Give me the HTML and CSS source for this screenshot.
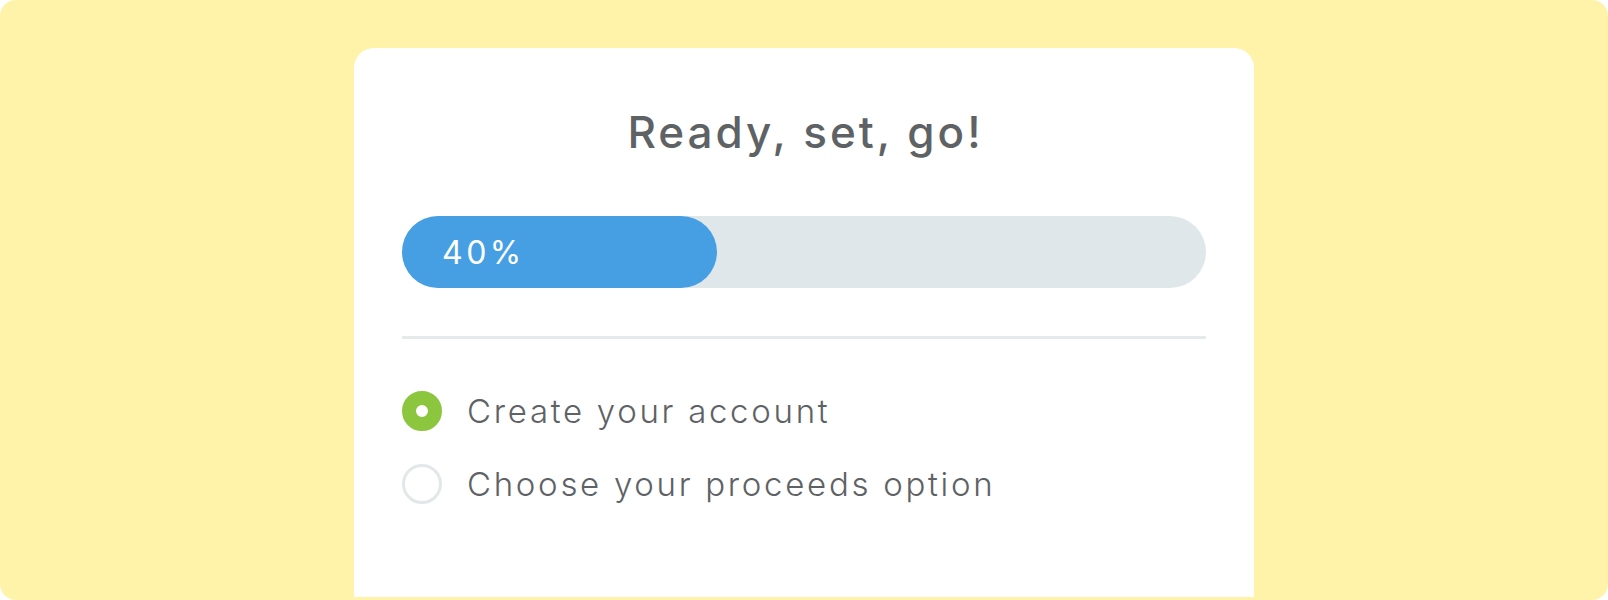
FILE: index.html
```html
<!DOCTYPE html>
<html>
<head>
<meta charset="utf-8">
<link rel="stylesheet" href="styles.css">
</head>
<body>
<div class="frame">
  <div class="card">
    <h1 class="title">Ready, set, go!</h1>
    <div class="progress">
      <div class="progress-fill" style="width: 39.2%"><span class="progress-label">40%</span></div>
    </div>
    <div class="divider"></div>
    <ul class="steps">
      <li class="step step-done"><span class="dot"></span><span class="step-text">Create your account</span></li>
      <li class="step"><span class="dot"></span><span class="step-text">Choose your proceeds option</span></li>
    </ul>
  </div>
</div>
</body>
</html>
```
FILE: styles.css
```css
html, body {
  margin: 0;
  padding: 0;
  background: #ffffff;
}
body {
  font-family: "Inter", "Lato", sans-serif;
}
.frame {
  width: 1608px;
  height: 600px;
  background: #fef3a9;
  border-radius: 16px;
  overflow: hidden;
  box-sizing: border-box;
  padding-top: 48px;
}
.card {
  width: 900px;
  height: 549px;
  margin: 0 auto;
  background: #ffffff;
  border-radius: 20px 20px 0 0;
  box-sizing: border-box;
  padding: 56px 48px 0;
}
.title {
  margin: 0;
  text-align: center;
  font-size: 44px;
  line-height: 56px;
  font-weight: 500;
  letter-spacing: 3px;
  text-indent: 3px;
  color: #5e6265;
}
.progress {
  margin-top: 56px;
  height: 72px;
  border-radius: 36px;
  background: #dfe7eb;
  display: flex;
}
.progress-fill {
  height: 72px;
  border-radius: 36px;
  background: #479fe3;
  display: flex;
  align-items: center;
  padding-left: 40px;
  box-sizing: border-box;
}
.progress-label {
  color: #ffffff;
  font-size: 32px;
  font-weight: 400;
  letter-spacing: 3.5px;
}
.divider {
  margin-top: 48px;
  height: 3px;
  background: #e4e9ea;
}
.steps {
  list-style: none;
  margin: 52px 0 0;
  padding: 0;
  display: flex;
  flex-direction: column;
  gap: 33px;
}
.step {
  display: flex;
  align-items: center;
  height: 40px;
  gap: 25px;
}
.dot {
  width: 40px;
  height: 40px;
  border-radius: 50%;
  box-sizing: border-box;
  border: 3px solid #e2e8e9;
  flex: none;
}
.step-done .dot {
  border: 14px solid #8cc63f;
  background: #ffffff;
}
.step-text {
  font-size: 33px;
  font-weight: 300;
  letter-spacing: 2.7px;
  color: #5e6265;
}
```
